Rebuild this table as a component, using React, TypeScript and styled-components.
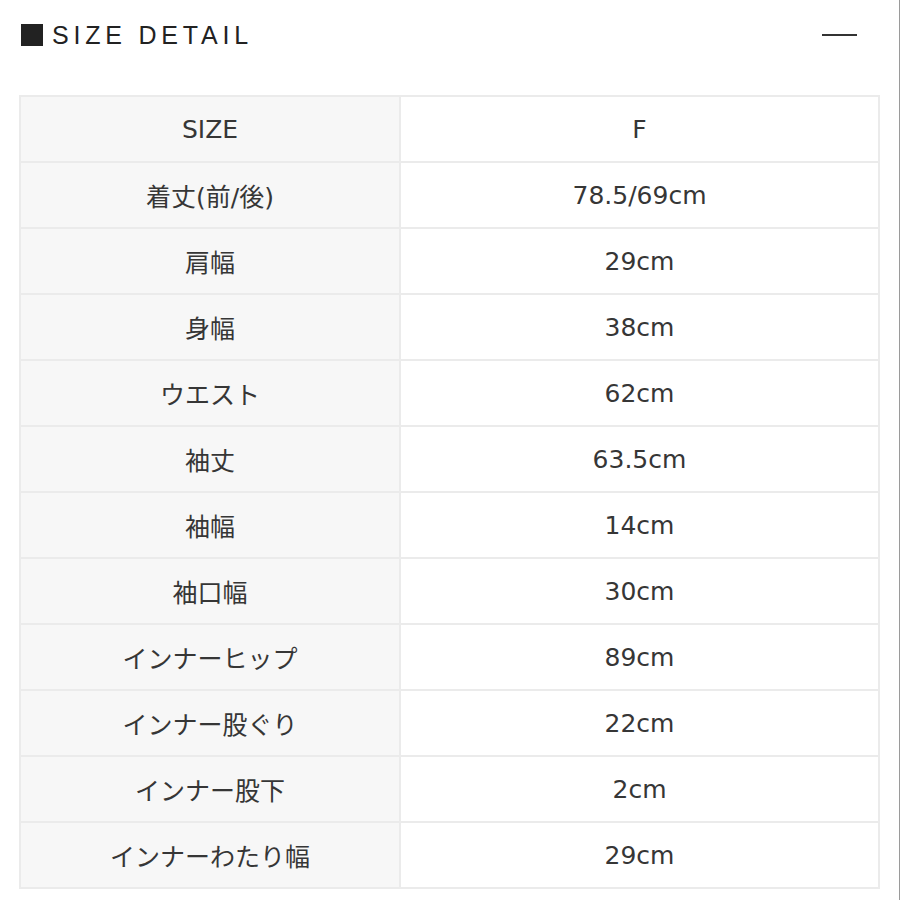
import React from "react";
import styled, { createGlobalStyle } from "styled-components";

const Global = createGlobalStyle`
  html, body { margin: 0; padding: 0; background: #fff; }
  * { box-sizing: border-box; }
`;

const Page = styled.div`
  width: 900px;
  height: 900px;
  background: #fff;
  border-right: 1px solid #9a9a9a;
  padding: 20px 20px 0 19px;
  font-family: "DejaVu Sans", "Noto Sans CJK JP", sans-serif;
  color: #333;
`;

const Header = styled.div`
  display: flex;
  align-items: center;
  justify-content: space-between;
  height: 30px;
  padding: 0 22px 0 2px;
`;

const Title = styled.h2`
  display: flex;
  align-items: center;
  gap: 9px;
  margin: 0;
  font-family: "Liberation Sans", sans-serif;
  font-weight: 400;
  font-size: 25px;
  letter-spacing: 4.8px;
  color: #222;
`;

const Square = styled.span`
  width: 22px;
  height: 22px;
  background: #222;
  display: inline-block;
`;

const Dash = styled.span`
  width: 35px;
  height: 2px;
  background: #333;
  display: block;
`;

const Table = styled.table`
  margin-top: 45px;
  width: 861px;
  border-collapse: collapse;
  border: 2px solid #ebebeb;
  table-layout: fixed;
`;

const Row = styled.tr`
  height: 66px;
`;

const Cell = styled.td<{ $label?: boolean }>`
  border: 2px solid #ebebeb;
  background: ${(p) => (p.$label ? "#f7f7f7" : "#fff")};
  width: ${(p) => (p.$label ? "380px" : "auto")};
  text-align: center;
  vertical-align: middle;
  font-size: 25px;
  font-weight: 400;
  color: #363636;
  padding: 0;
`;

const rows: [string, string][] = [
  ["SIZE", "F"],
  ["着丈(前/後)", "78.5/69cm"],
  ["肩幅", "29cm"],
  ["身幅", "38cm"],
  ["ウエスト", "62cm"],
  ["袖丈", "63.5cm"],
  ["袖幅", "14cm"],
  ["袖口幅", "30cm"],
  ["インナーヒップ", "89cm"],
  ["インナー股ぐり", "22cm"],
  ["インナー股下", "2cm"],
  ["インナーわたり幅", "29cm"],
];

export default function App() {
  return (
    <Page>
      <Global />
      <Header>
        <Title>
          <Square />
          SIZE DETAIL
        </Title>
        <Dash />
      </Header>
      <Table>
        <tbody>
          {rows.map(([k, v]) => (
            <Row key={k}>
              <Cell $label>{k}</Cell>
              <Cell>{v}</Cell>
            </Row>
          ))}
        </tbody>
      </Table>
    </Page>
  );
}
